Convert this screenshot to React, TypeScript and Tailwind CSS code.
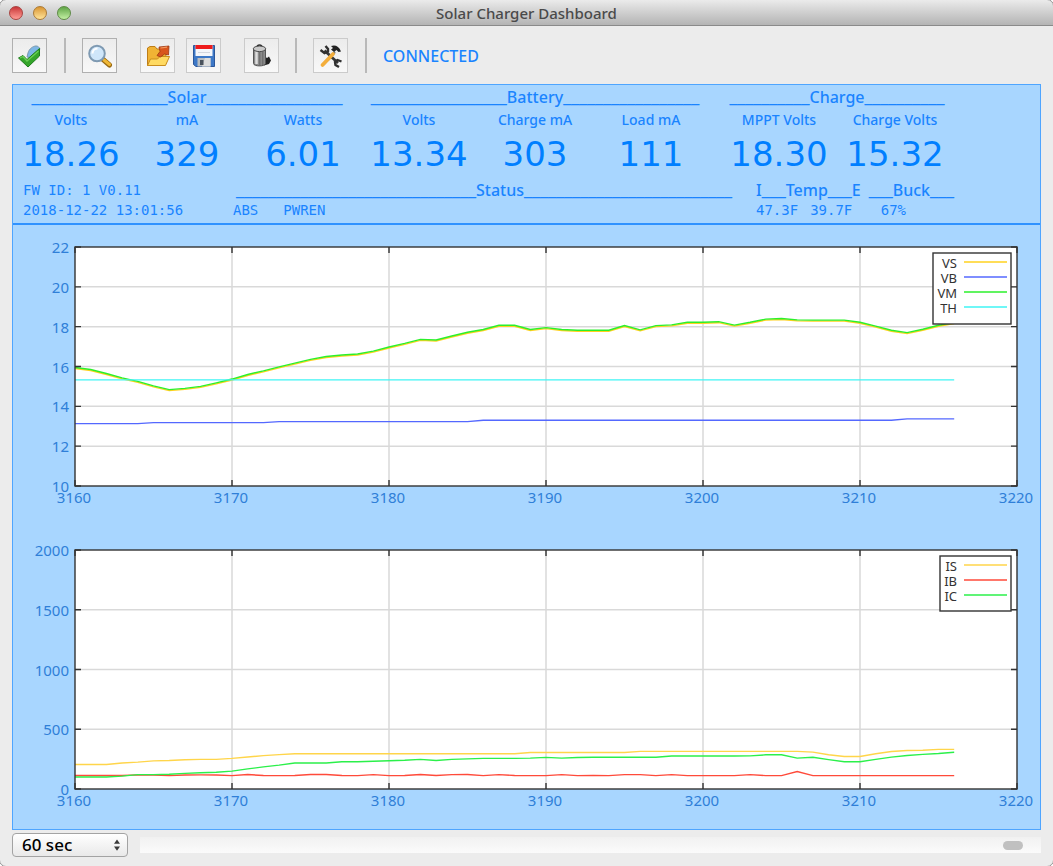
import React, { useState } from 'react';

interface Series {
  name: string;
  color: string;
  values: number[];
}

interface ChartProps {
  label: string;
  min: number;
  max: number;
  step: number;
  series: Series[];
  legendWidth: number;
  legendHeight: number;
}

const fill = (value: number, count: number): number[] => Array(count).fill(value);

const VM = [
  15.95, 15.85, 15.65, 15.43, 15.25, 15.03, 14.84, 14.9, 15.0, 15.18,
  15.37, 15.6, 15.78, 15.98, 16.17, 16.36, 16.5, 16.58, 16.63, 16.77,
  16.98, 17.16, 17.36, 17.33, 17.53, 17.72, 17.86, 18.07, 18.07, 17.86,
  17.95, 17.86, 17.82, 17.82, 17.82, 18.06, 17.84, 18.05, 18.09, 18.22,
  18.22, 18.25, 18.08, 18.22, 18.38, 18.41, 18.34, 18.33, 18.33, 18.33,
  18.22, 18.03, 17.82, 17.7, 17.87, 18.07, 18.2,
];

const IS = [
  205, 205, 205, 218, 225, 235, 238, 245, 248, 248, 256, 268, 279, 288,
  ...fill(295, 15), ...fill(305, 7), ...fill(315, 11),
  309, 287, 272, 272, 295, 314, 322, 324, 332, 332,
];

const IB = [
  ...fill(113, 4), 118, 116, 112, 117, 118, 117, 112, 121, 113, 112, 113, 121, 121, 113, 112, 120,
  112, 113, 121, 113, 120, 121, 112, 120, 113, 112, 112, 120, 112, 113, 112, 120, 120, 112, 120, 112,
  112, 112, 112, 120, 112, 112, 146, ...fill(112, 10),
];

const IC = [
  100, 100, 100, 108, 120, 120, 124, 131, 136, 140, 150, 168, 185, 200, 218, 218, 218, 228, 228, 232,
  236, 240, 248, 238, 248, 252, 256, 256, 256, 258, 265, 258, 264, 266, 266, 266, 266, 266, 276, 276,
  276, 276, 276, 277, 286, 286, 258, 266, 246, 228, 228, 248, 267, 280, 290, 297, 307,
];

const voltSeries: Series[] = [
  { name: 'VS', color: '#ffd21f', values: VM.map((v) => v - 0.05) },
  { name: 'VB', color: '#5468ff', values: [...fill(13.13, 5), ...fill(13.18, 8), ...fill(13.23, 13), ...fill(13.3, 27), ...fill(13.37, 4)] },
  { name: 'VM', color: '#2bf02b', values: VM },
  { name: 'TH', color: '#3ff5f5', values: fill(15.33, 57) },
];

const currentSeries: Series[] = [
  { name: 'IS', color: '#ffd54a', values: IS },
  { name: 'IB', color: '#ff4a3a', values: IB },
  { name: 'IC', color: '#2bf04a', values: IC },
];

const LEFT = 62;
const TOP = 22;
const WIDTH = 942;
const HEIGHT = 239;

const Chart: React.FC<ChartProps> = ({ label, min, max, step, series, legendWidth, legendHeight }) => {
  const toX = (n: number) => LEFT + (n / 60) * WIDTH;
  const toY = (v: number) => TOP + HEIGHT - ((v - min) / (max - min)) * HEIGHT;
  const rows = Array.from({ length: (max - min) / step + 1 }, (_, i) => min + i * step);
  const cols = [0, 10, 20, 30, 40, 50, 60];
  const legendX = LEFT + WIDTH - 6 - legendWidth;

  return (
    <svg viewBox="0 0 1027 290" className="block w-full font-['Noto_Sans',sans-serif]" role="img" aria-label={label}>
      <rect x={LEFT} y={TOP} width={WIDTH} height={HEIGHT} fill="#ffffff" />
      {rows.slice(1, -1).map((v) => (
        <line key={v} x1={LEFT} x2={LEFT + WIDTH} y1={toY(v)} y2={toY(v)} stroke="#d9d9d9" strokeWidth="1.5" />
      ))}
      {cols.slice(1, -1).map((n) => (
        <line key={n} x1={toX(n)} x2={toX(n)} y1={TOP} y2={TOP + HEIGHT} stroke="#d9d9d9" strokeWidth="1.5" />
      ))}
      {series.map((s) => (
        <polyline
          key={s.name}
          points={s.values.map((v, i) => `${toX(i)},${toY(v)}`).join(' ')}
          fill="none"
          stroke={s.color}
          strokeWidth="1.4"
        />
      ))}
      <g stroke="#333333" strokeWidth="1.4">
        {rows.map((v) => (
          <path key={v} d={`M${LEFT} ${toY(v)}h6M${LEFT + WIDTH} ${toY(v)}h-6`} />
        ))}
        {cols.map((n) => (
          <path key={n} d={`M${toX(n)} ${TOP}v6M${toX(n)} ${TOP + HEIGHT}v-6`} />
        ))}
        <rect x={LEFT} y={TOP} width={WIDTH} height={HEIGHT} fill="none" />
      </g>
      <g fontSize="15" fill="#2f7fd8">
        {rows.map((v) => (
          <text key={v} x={LEFT - 6} y={toY(v) + 6} textAnchor="end">{v}</text>
        ))}
        {cols.map((n) => (
          <text key={n} x={toX(n) - 1} y={TOP + HEIGHT + 17} textAnchor="middle">{3160 + n}</text>
        ))}
      </g>
      <rect x={legendX} y={TOP + 6} width={legendWidth} height={legendHeight} fill="#ffffff" stroke="#333333" strokeWidth="1.4" />
      {series.map((s, i) => (
        <g key={s.name}>
          <text x={LEFT + WIDTH - 60} y={TOP + 21 + i * 15} textAnchor="end" fontSize="13" fill="#333333">{s.name}</text>
          <line x1={LEFT + WIDTH - 53} x2={LEFT + WIDTH - 10} y1={TOP + 15 + i * 15} y2={TOP + 15 + i * 15} stroke={s.color} strokeWidth="1.5" />
        </g>
      ))}
    </svg>
  );
};

interface HeadingProps {
  title: string;
  dashes: number;
  dashesAfter?: number;
  before?: string;
  after?: string;
}

const Heading: React.FC<HeadingProps> = ({ title, dashes, dashesAfter = dashes, before, after }) => (
  <h2 className="text-center text-[16px] leading-[22px] font-medium whitespace-nowrap">
    {before}
    <span className="align-[2px] font-['DejaVu_Sans',sans-serif] leading-none">{'_'.repeat(dashes)}</span>
    {title}
    <span className="align-[2px] font-['DejaVu_Sans',sans-serif] leading-none">{'_'.repeat(dashesAfter)}</span>
    {after}
  </h2>
);

const ReadingGroup: React.FC<{ title: string; dashes: number; readings: [string, string][] }> = ({ title, dashes, readings }) => (
  <section>
    <div className="pt-px">
      <Heading title={title} dashes={dashes} />
    </div>
    <dl className="flex pt-[2px]">
      {readings.map(([name, value]) => (
        <div key={name} className="w-[116px] text-center whitespace-nowrap">
          <dt className="text-[14px] leading-5 font-medium">{name}</dt>
          <dd className="font-['DejaVu_Sans',sans-serif] text-[34px] leading-[49px] text-[#007fff]">{value}</dd>
        </div>
      ))}
    </dl>
  </section>
);

const ToolButton: React.FC<{ label: string; strong?: boolean; children: React.ReactNode }> = ({ label, strong, children }) => (
  <button
    type="button"
    aria-label={label}
    className={`flex size-[35px] shrink-0 items-center justify-center border bg-linear-to-b from-[#ececec] to-[#f8f8f8] ${strong ? 'border-[#b0b0b0]' : 'border-[#cbcbcb]'}`}
  >
    <svg viewBox="0 0 26 26" className="size-[26px]" aria-hidden="true">{children}</svg>
  </button>
);

const Separator: React.FC = () => <div className="h-[35px] w-[2px] bg-[#b9b9b9]" />;

const Toolbar: React.FC = () => (
  <div className="flex items-center px-3 pt-3 pb-[11px]">
    <ToolButton label="Connect" strong>
      <path d="M11 10c1-4 5-7 8-7 2 0 3 1 4 3l-7 9-6-1z" fill="#7db7e6" stroke="#7c98ad" />
      <path d="M1.500 15l4.500-2.500 4 4L22.500 5.500v7.500L11 24z" fill="#35a52b" stroke="#1d7d1b" strokeLinejoin="round" />
      <path d="M3 15l3-1.500 4 4.500L21.500 8" fill="none" stroke="#69cf55" strokeWidth="1.300" />
    </ToolButton>
    <div className="w-[17px]" />
    <Separator />
    <div className="w-4" />
    <ToolButton label="Search" strong>
      <path d="M15.500 16l7 6" stroke="#9a6a12" strokeWidth="5" strokeLinecap="round" />
      <path d="M17 17l5.500 4.500" stroke="#efb735" strokeWidth="3" strokeLinecap="round" />
      <circle cx="10" cy="10.500" r="7.800" fill="#cfe6fa" stroke="#7f9ab2" strokeWidth="2" />
      <path d="M5.500 10.500a5 5 0 0 1 5-5" fill="none" stroke="#ffffff" strokeWidth="2" />
    </ToolButton>
    <div className="w-[23px]" />
    <ToolButton label="Open">
      <path d="M2.500 22.500V5L5 3.500h5L12 6h9v15z" fill="#f0b334" stroke="#bd7d18" strokeLinejoin="round" />
      <path d="M2.500 22.500l3-6.500h7l2.500-2.500h9.500L20.500 22.500z" fill="#ffda62" stroke="#c98d1e" strokeLinejoin="round" />
      <path d="M12 12.500l3-4-1-4.500 10-1-.5 9-4-1-4 3z" fill="#d9561d" stroke="#9c3710" strokeWidth=".8" strokeLinejoin="round" />
      <path d="M15.500 5l6.500-.8" stroke="#f39a62" strokeWidth="1.200" />
    </ToolButton>
    <div className="w-[11px]" />
    <ToolButton label="Save">
      <path d="M2.500 2.500h21v21H5l-2.500-2z" fill="#3d78c7" stroke="#2c579a" strokeLinejoin="round" />
      <rect x="4.500" y="2" width="17" height="11" fill="#f4f6fa" />
      <rect x="4.500" y="2" width="17" height="4" fill="#ee1c1c" />
      <path d="M7 9.500h12" stroke="#d3d7df" />
      <rect x="6.500" y="15" width="13" height="8.500" fill="#b9bdc0" />
      <path d="M14 15h5.500v8.500H11z" fill="#dddddd" />
      <rect x="9" y="17" width="3.500" height="5" fill="#4a525c" />
    </ToolButton>
    <div className="w-[23px]" />
    <ToolButton label="Clear log">
      <path d="M15 13l3 2 2-1.500 2 4-2 3.500-5 1.500z" fill="#222222" />
      <path d="M4.500 6v14.500c0 3.200 12 3.200 12 0V6z" fill="#8b8b8b" stroke="#555555" />
      <path d="M7.500 8v13" stroke="#dedede" strokeWidth="2.500" />
      <path d="M10.800 9v13.500M13.800 9v13" stroke="#666666" />
      <ellipse cx="10.500" cy="5.800" rx="6.200" ry="2.800" fill="#c9c9c9" stroke="#4c4c4c" />
      <path d="M8 3q2.500-2 5 0" fill="none" stroke="#333333" strokeWidth="1.500" />
    </ToolButton>
    <div className="w-4" />
    <Separator />
    <div className="w-4" />
    <ToolButton label="Settings">
      <path d="M6.500 7.500L20 20" stroke="#383838" strokeWidth="2.800" />
      <path d="M2.500 7l4 3 3.500-1.500V6L7.500 3M23.500 18.500l-4-1.500-2.500 2 .5 3 3.500 2" fill="none" stroke="#303030" strokeWidth="2.400" />
      <path d="M17 9l-7 8" stroke="#777777" strokeWidth="2" />
      <path d="M13 3c4-1.500 8 0 10 5.500l-2.500.5-2-2-2.500 2-3-2.500 2-1.500z" fill="#222222" />
      <path d="M15 11L4.500 22" stroke="#f3ae3c" strokeWidth="3.800" strokeLinecap="round" />
    </ToolButton>
    <div className="w-[17px]" />
    <Separator />
    <p className="pl-4 text-[16px] leading-5 font-medium text-[#1a84ff]" role="status">CONNECTED</p>
  </div>
);

const App: React.FC = () => {
  const [interval, setInterval] = useState('60');
  const [position, setPosition] = useState(98);

  return (
    <div className="flex min-h-screen flex-col overflow-hidden rounded-[6px] bg-[#ececec] font-['Noto_Sans',sans-serif] outline outline-[#8c8c8c]">
      <header className="flex h-[26px] items-center border-b border-[#8a8a8a] bg-linear-to-b from-[#ebebeb] to-[#b4b4b4] px-[9px]">
        <div className="flex flex-1 gap-[10px]">
          <button type="button" aria-label="Close" className="size-[14px] rounded-full border border-[#a8433f] bg-linear-to-b from-[#c9343a] to-[#ff9c96]" />
          <button type="button" aria-label="Minimize" className="size-[14px] rounded-full border border-[#ab7a35] bg-linear-to-b from-[#d9962f] to-[#ffe497]" />
          <button type="button" aria-label="Zoom" className="size-[14px] rounded-full border border-[#5d8a45] bg-linear-to-b from-[#5fa545] to-[#c4f0a4]" />
        </div>
        <h1 className="text-[15px] leading-5 font-medium text-[#4a4a4a]">Solar Charger Dashboard</h1>
        <div className="flex-1" />
      </header>

      <Toolbar />

      <main className="mx-3 border border-[#4ea5ff] bg-[#a8d6ff]">
        <div className="border-b-2 border-[#2f92ff] pb-1 text-[#1a84ff]">
          <div className="flex">
            <ReadingGroup title="Solar" dashes={17} readings={[['Volts', '18.26'], ['mA', '329'], ['Watts', '6.01']]} />
            <ReadingGroup title="Battery" dashes={17} readings={[['Volts', '13.34'], ['Charge mA', '303'], ['Load mA', '111']]} />
            <div className="w-3" />
            <ReadingGroup title="Charge" dashes={10} readings={[['MPPT Volts', '18.30'], ['Charge Volts', '15.32']]} />
          </div>
          <div className="flex pl-[10px] whitespace-nowrap">
            <div className="w-[210px] font-['DejaVu_Sans_Mono',monospace] text-[14px]">
              <p className="leading-[22px]">FW ID: 1 V0.11</p>
              <p className="leading-[18px]">2018-12-22 13:01:56</p>
            </div>
            <div className="w-[502px]">
              <Heading title="Status" dashes={30} dashesAfter={26} />
              <p className="flex gap-[25px] font-['DejaVu_Sans_Mono',monospace] text-[14px] leading-[18px]">
                <span>ABS</span>
                <span>PWREN</span>
              </p>
            </div>
            <div className="w-[21px]" />
            <div>
              <Heading title="Temp" dashes={3} before="I" after="E" />
              <p className="flex gap-3 font-['DejaVu_Sans_Mono',monospace] text-[14px] leading-[18px]">
                <span>47.3F</span>
                <span>39.7F</span>
              </p>
            </div>
            <div className="w-2" />
            <div>
              <Heading title="Buck" dashes={3} />
              <p className="pl-3 font-['DejaVu_Sans_Mono',monospace] text-[14px] leading-[18px]">67%</p>
            </div>
          </div>
        </div>

        <div className="flex flex-col gap-[13px] pb-[11px]">
          <Chart label="Voltages" min={10} max={22} step={2} series={voltSeries} legendWidth={78} legendHeight={71} />
          <Chart label="Currents" min={0} max={2000} step={500} series={currentSeries} legendWidth={71} legendHeight={55} />
        </div>
      </main>

      <footer className="flex items-center gap-3 px-3 pt-[3px] pb-2">
        <div className="relative w-[116px]">
          <select
            aria-label="Update interval"
            value={interval}
            onChange={(e) => setInterval(e.target.value)}
            className="block h-6 w-full appearance-none rounded-[4px] border border-[#a3a3a3] bg-linear-to-b from-white to-[#e9e9e9] pl-[9px] text-[17px] leading-5 font-medium text-black"
          >
            <option value="30">30 sec</option>
            <option value="60">60 sec</option>
            <option value="120">120 sec</option>
          </select>
          <svg viewBox="0 0 8 14" className="pointer-events-none absolute top-[5px] right-[7px] h-[14px] w-2" aria-hidden="true">
            <path d="M1 5.800L4 1.500l3 4.300zM1 8.500l3 4.300 3-4.300z" fill="#3a3a3a" />
          </svg>
        </div>
        <input
          type="range"
          aria-label="Timeline position"
          min={0}
          max={100}
          value={position}
          onChange={(e) => setPosition(Number(e.target.value))}
          className="h-4 flex-1 appearance-none bg-linear-to-b from-[#f1f1f1] to-[#fbfbfb] [&::-webkit-slider-thumb]:h-[9px] [&::-webkit-slider-thumb]:w-5 [&::-webkit-slider-thumb]:appearance-none [&::-webkit-slider-thumb]:rounded-full [&::-webkit-slider-thumb]:bg-[#c0c0c0]"
        />
      </footer>
    </div>
  );
};

export default App;
